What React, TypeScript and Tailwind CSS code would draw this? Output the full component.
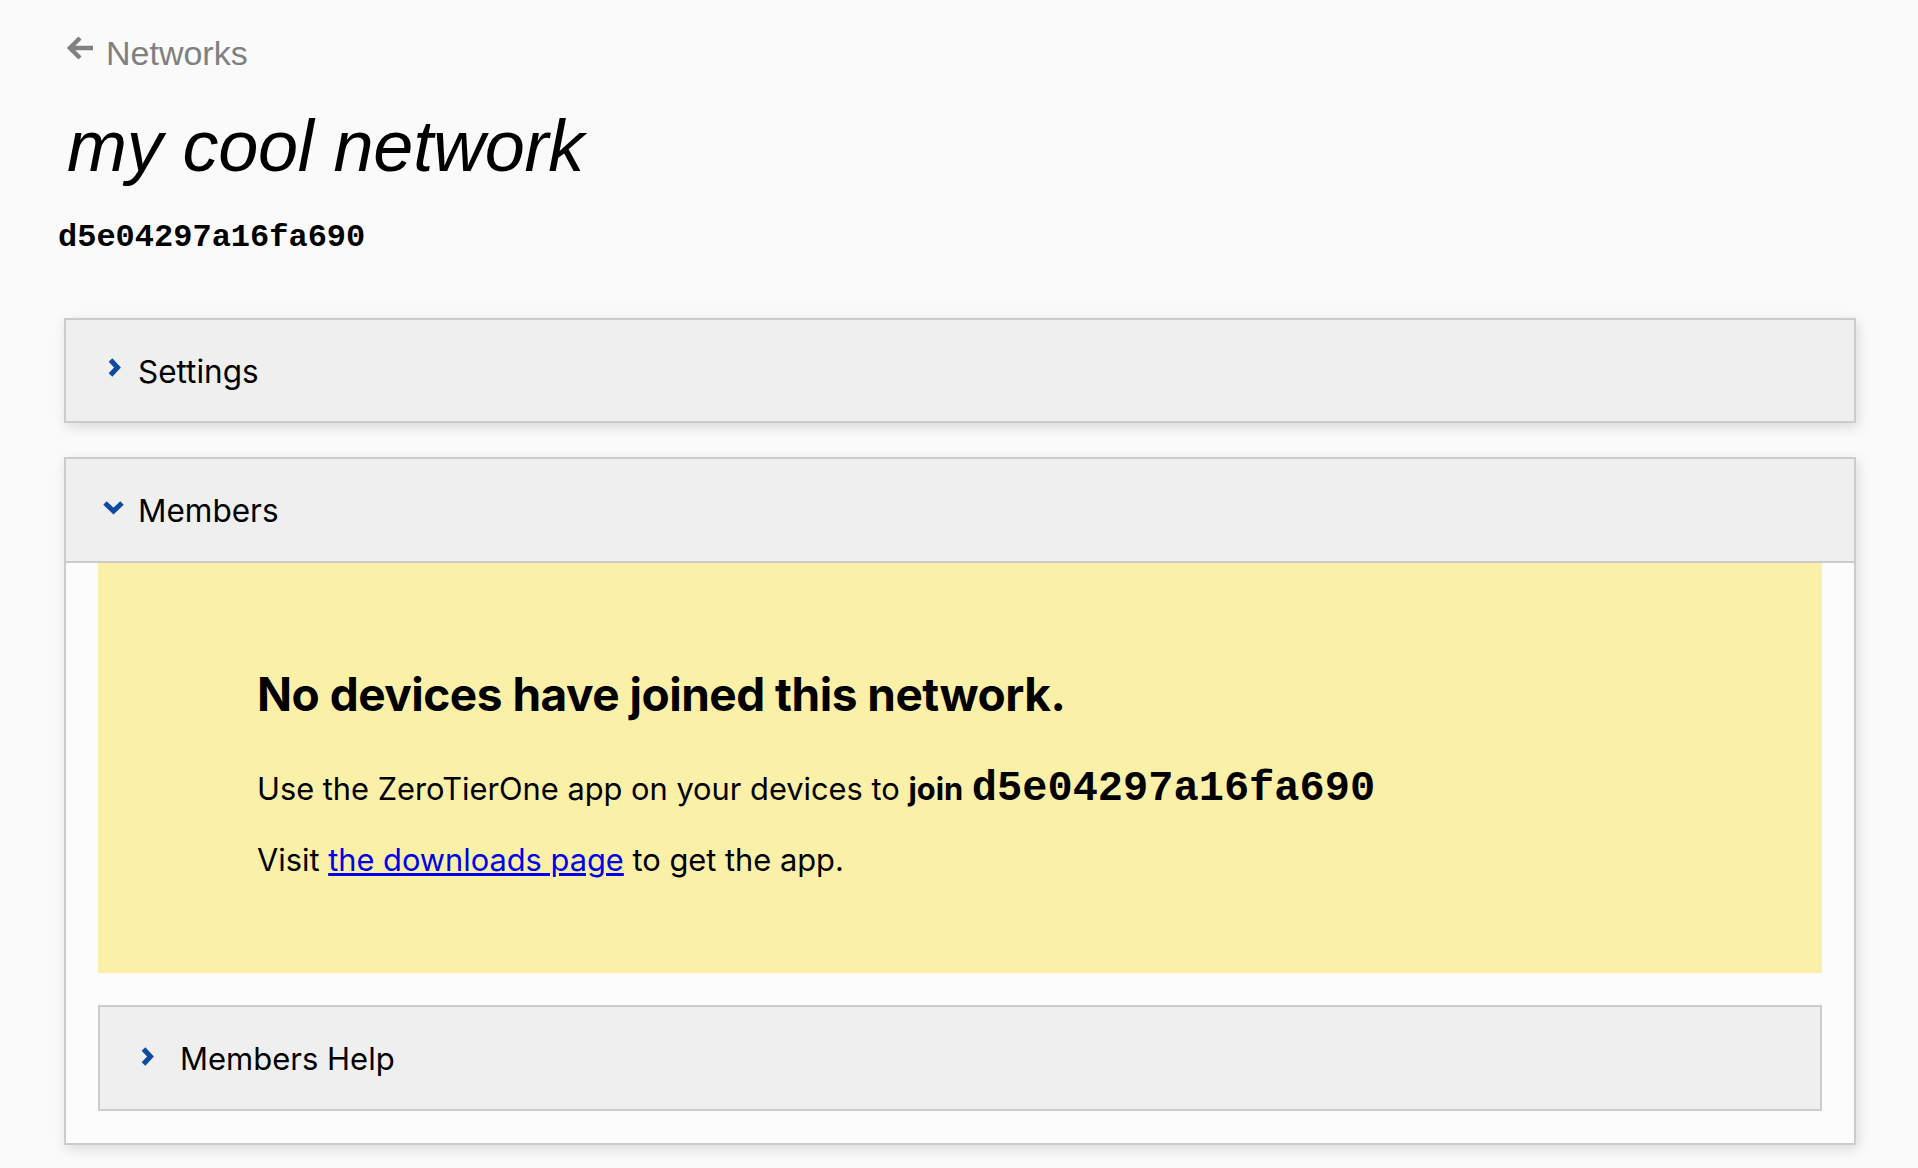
import React from "react";

const NETWORK_ID = "d5e04297a16fa690";

function ChevronRight() {
	return (
		<svg width="15" height="21" viewBox="0 0 15 21" className="shrink-0">
			<polyline
				points="3.5,3 10.5,10.5 3.5,18"
				fill="none"
				stroke="#0d4aa0"
				strokeWidth="5"
			/>
		</svg>
	);
}

function ChevronDown() {
	return (
		<svg width="23" height="15" viewBox="0 0 23 15" className="shrink-0">
			<polyline
				points="3,3 11.5,11 20,3"
				fill="none"
				stroke="#0d4aa0"
				strokeWidth="5"
			/>
		</svg>
	);
}

function BackArrow() {
	return (
		<svg width="28" height="26" viewBox="0 0 28 26" className="shrink-0">
			<line x1="5" y1="13" x2="27" y2="13" stroke="#808080" strokeWidth="4.5" />
			<polyline
				points="14,3 4,13 14,23"
				fill="none"
				stroke="#808080"
				strokeWidth="4.5"
			/>
		</svg>
	);
}

export default function App() {
	return (
		<div className="min-h-[1168px] bg-[#fafafa] pt-[33px] pr-[62px] pl-[64px] text-black">
			<a
				href="#"
				className="flex items-start gap-[12px] text-[#808080] no-underline"
				style={{ fontFamily: '"Liberation Sans", Arial, sans-serif' }}
			>
				<span className="mt-[2px] ml-[2px]">
					<BackArrow />
				</span>
				<span className="text-[34px] leading-[40px]">Networks</span>
			</a>

			<h1
				className="mt-[37px] ml-[3px] text-[72px] leading-none font-normal italic tracking-[-0.2px]"
				style={{ fontFamily: '"Liberation Sans", Arial, sans-serif' }}
			>
				my cool network
			</h1>

			<div
				className="mt-[40px] -ml-[6px] text-[32px] leading-none font-bold"
				style={{ fontFamily: '"Liberation Mono", "Courier New", monospace' }}
			>
				{NETWORK_ID}
			</div>

			<div style={{ fontFamily: "Inter, sans-serif" }}>
				{/* settings, collapsed */}
				<div className="mt-[64px] flex h-[105px] items-center border-2 border-[#cccccc] bg-[#efefef] pl-[41px] shadow-[2px_4px_12px_rgba(0,0,0,0.13)]">
					<span className="-mt-[6px]">
						<ChevronRight />
					</span>
					<span className="mt-[3px] ml-[16px] text-[31.5px]">Settings</span>
				</div>

				{/* members, open */}
				<div className="mt-[34px] border-2 border-[#cccccc] bg-[#fcfcfc] shadow-[2px_4px_12px_rgba(0,0,0,0.13)]">
					<div className="flex h-[104px] items-center border-b-2 border-[#cccccc] bg-[#efefef] pl-[36px]">
						<span className="-mt-[6px]">
							<ChevronDown />
						</span>
						<span className="mt-[2px] ml-[13px] text-[31.5px]">Members</span>
					</div>

					<div className="px-[32px] pb-[32px]">
						<div className="bg-[#fbf0a8] pt-[103px] pb-[93px] pl-[159px]">
							<h2 className="text-[46px] leading-[56px] font-bold tracking-[-0.5px]">
								No devices have joined this network.
							</h2>
							<p className="mt-[46px] text-[30.8px] leading-[40px]">
								Use the ZeroTierOne app on your devices to{" "}
								<b className="font-bold">join</b>{" "}
								<code
									className="text-[42px] leading-none font-bold"
									style={{
										fontFamily: '"Liberation Mono", "Courier New", monospace',
									}}
								>
									{NETWORK_ID}
								</code>
							</p>
							<p className="mt-[30px] text-[30.8px] leading-[40px]">
								Visit{" "}
								<a href="#" className="text-[#0000ee] underline">
									the downloads page
								</a>{" "}
								to get the app.
							</p>
						</div>

						<div className="mt-[32px] flex h-[106px] items-center border-2 border-[#cccccc] bg-[#efefef] pl-[40px]">
							<span className="-mt-[4px]">
								<ChevronRight />
							</span>
							<span className="mt-[2px] ml-[25px] text-[31px]">Members Help</span>
						</div>
					</div>
				</div>
			</div>
		</div>
	);
}
